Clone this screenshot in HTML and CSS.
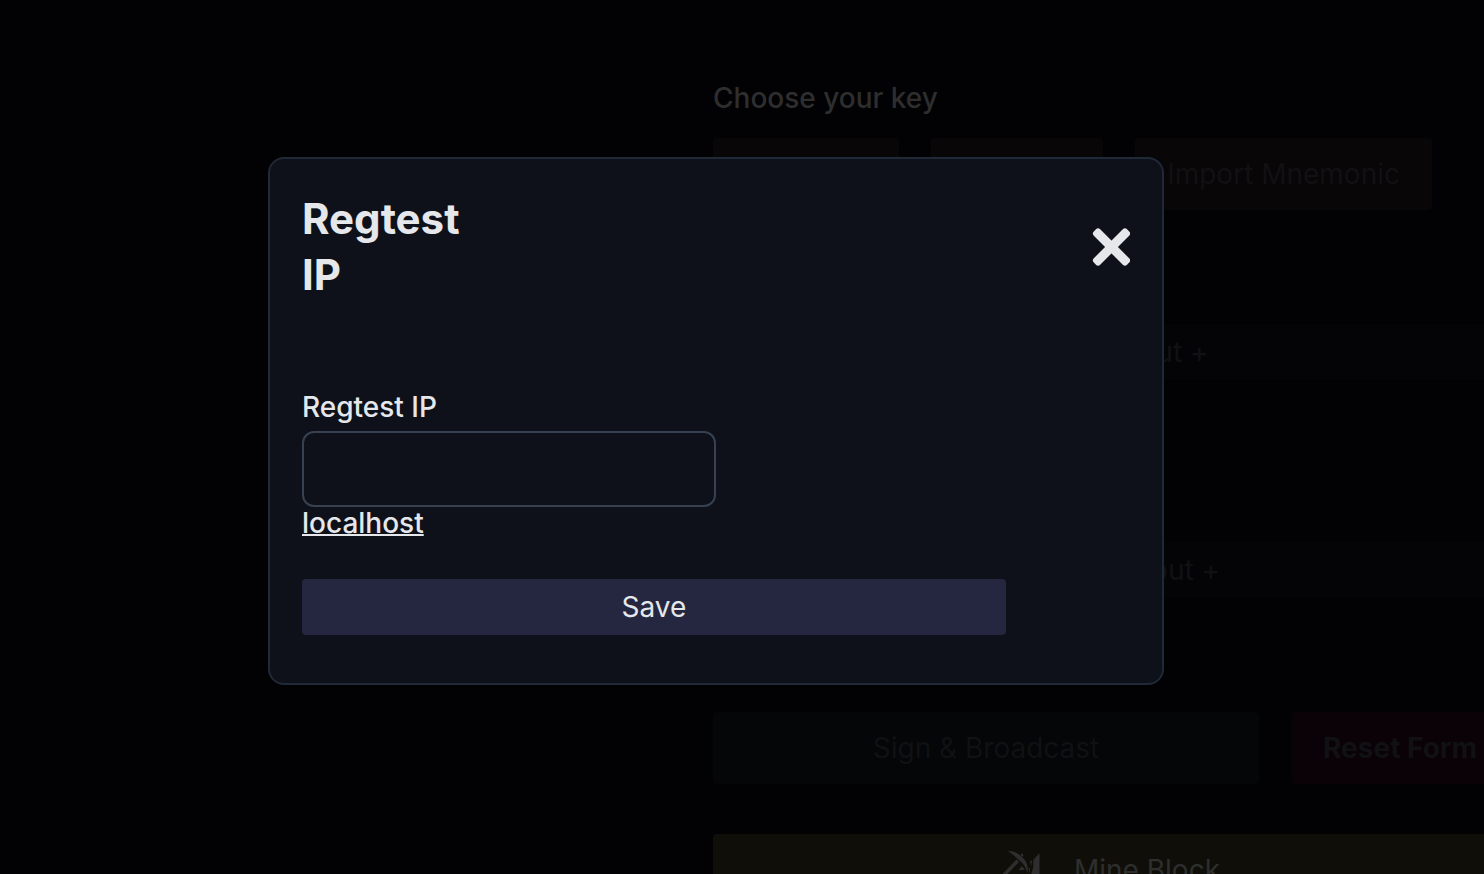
FILE: index.html
```html
<!DOCTYPE html>
<html lang="en">
<head>
<meta charset="utf-8">
<meta name="viewport" content="width=device-width, initial-scale=1">
<title>Regtest IP</title>
<link rel="stylesheet" href="styles.css">
</head>
<body>
<main class="page">
  <section class="form-column">
    <h1 class="column-title">Choose your key</h1>
    <div class="key-actions">
      <button class="btn btn-key" type="button">Generate</button>
      <button class="btn btn-key" type="button">Random</button>
      <button class="btn btn-key" type="button">Import Mnemonic</button>
    </div>
    <button class="btn btn-add btn-add-input" type="button">Add an Input +</button>
    <button class="btn btn-add btn-add-output" type="button">Add an Output +</button>
    <div class="form-actions">
      <button class="btn btn-sign" type="button">Sign &amp; Broadcast</button>
      <button class="btn btn-reset" type="button">Reset Form</button>
    </div>
    <button class="btn btn-mine" type="button">
      <svg class="mine-icon" viewBox="0 0 40 40" aria-hidden="true">
        <path d="M5.500 .7C12 .8 17 3.500 21.500 8.500C25 12.500 26.500 17 25.500 23C24 17.500 21.500 13.500 17.500 10.500C14 7.500 10 3.500 5.500 .7Z"/>
        <path d="M14.500 9.500L17 12L3 26.500L.5 24Z"/>
        <path d="M18.500 4L20.500 3.500L21.500 5.500L20 7Z"/>
        <path d="M37.500 3V38H18L23 31L29 25L31.300 17V10Z"/>
        <path d="M28 11L30 10.500L29 17ZM16.500 20L20 16L23 20ZM26.500 18L28 18L27.500 24Z"/>
      </svg>
      <span>Mine Block</span>
    </button>
  </section>
</main>
<div class="overlay">
  <div class="modal" role="dialog" aria-modal="true" aria-labelledby="modal-title">
    <header class="modal-header">
      <h2 class="modal-title" id="modal-title">Regtest IP</h2>
      <button class="close" type="button" aria-label="Close">
        <svg class="close-icon" viewBox="0 0 38 38" aria-hidden="true">
          <g transform="rotate(45 19.500 19)">
            <rect x="-4" y="14.500" width="47" height="9" rx="3"/>
            <rect x="15" y="-4.500" width="9" height="47" rx="3"/>
          </g>
        </svg>
      </button>
    </header>
    <form class="modal-form">
      <label class="field-label" for="regtest-ip">Regtest IP</label>
      <input class="field-input" id="regtest-ip" type="text">
      <a class="host-link" href="#localhost">localhost</a>
      <button class="save" type="button">Save</button>
    </form>
  </div>
</div>
</body>
</html>
```
FILE: styles.css
```css
* { box-sizing: border-box; }

body {
  margin: 0;
  height: 100vh;
  overflow: hidden;
  background: #020204;
  color: #e5e7eb;
  font-family: Inter, "Liberation Sans", sans-serif;
  font-size: 28px;
  line-height: 40px;
}

button, input { font: inherit; color: inherit; }

h1, h2 { margin: 0; }

.page {
  height: 100vh;
  overflow: hidden;
  padding: 78px 0 0 calc(50% - 29px);
}

.form-column {
  display: flex;
  flex-direction: column;
  margin-right: -25px;
}

.column-title {
  color: #2e2e2e;
  font-size: 28px;
  font-weight: 500;
}

.btn {
  border: 0;
  border-radius: 4px;
  padding: 16px 32px;
  color: #111113;
  white-space: nowrap;
}

.key-actions {
  display: flex;
  gap: 32px;
  margin-top: 20px;
}

.btn-key { background: #080607; }

.btn-add {
  padding: 8px 32px;
  background: #040406;
}

.btn-add-input { margin-top: 114px; }
.btn-add-output { margin-top: 162px; }

.form-actions {
  display: flex;
  gap: 32px;
  margin-top: 114px;
}

.btn-sign {
  flex: 1;
  background: #040608;
}

.btn-reset {
  background: #0a0207;
  font-weight: 700;
}

.btn-mine {
  display: flex;
  align-items: center;
  justify-content: center;
  gap: 32px;
  margin-top: 50px;
  background: #0f0e09;
  color: #2e2e2e;
}

.mine-icon {
  width: 40px;
  height: 40px;
  fill: currentColor;
}

.overlay {
  position: fixed;
  inset: 0;
  display: flex;
  align-items: center;
  justify-content: center;
  padding: 0 52px 32px 0;
}

.modal {
  width: 100%;
  max-width: 896px;
  padding: 32px 32px 48px;
  border: 2px solid #1f2937;
  border-radius: 16px;
  background: #0e1119;
}

.modal-header {
  display: flex;
  align-items: center;
  justify-content: space-between;
}

.modal-title {
  max-width: 180px;
  font-size: 42px;
  font-weight: 700;
  line-height: 56px;
}

.close {
  display: flex;
  padding: 0;
  border: 0;
  background: none;
}

.close-icon {
  width: 38px;
  height: 38px;
  fill: #e5e7eb;
}

.modal-form {
  display: flex;
  flex-direction: column;
  align-items: flex-start;
  margin-top: 88px;
  line-height: 32px;
}

.field-label { font-weight: 500; }

.field-input {
  width: 414px;
  max-width: 100%;
  height: 76px;
  margin-top: 8px;
  padding: 16px;
  border: 2px solid #374151;
  border-radius: 12px;
  background: transparent;
}

.host-link {
  color: inherit;
  font-weight: 500;
  text-decoration-thickness: 2px;
}

.save {
  width: 85%;
  margin-top: 40px;
  padding: 8px;
  border: 0;
  border-radius: 4px;
  background: #24273f;
  line-height: 40px;
}
```
